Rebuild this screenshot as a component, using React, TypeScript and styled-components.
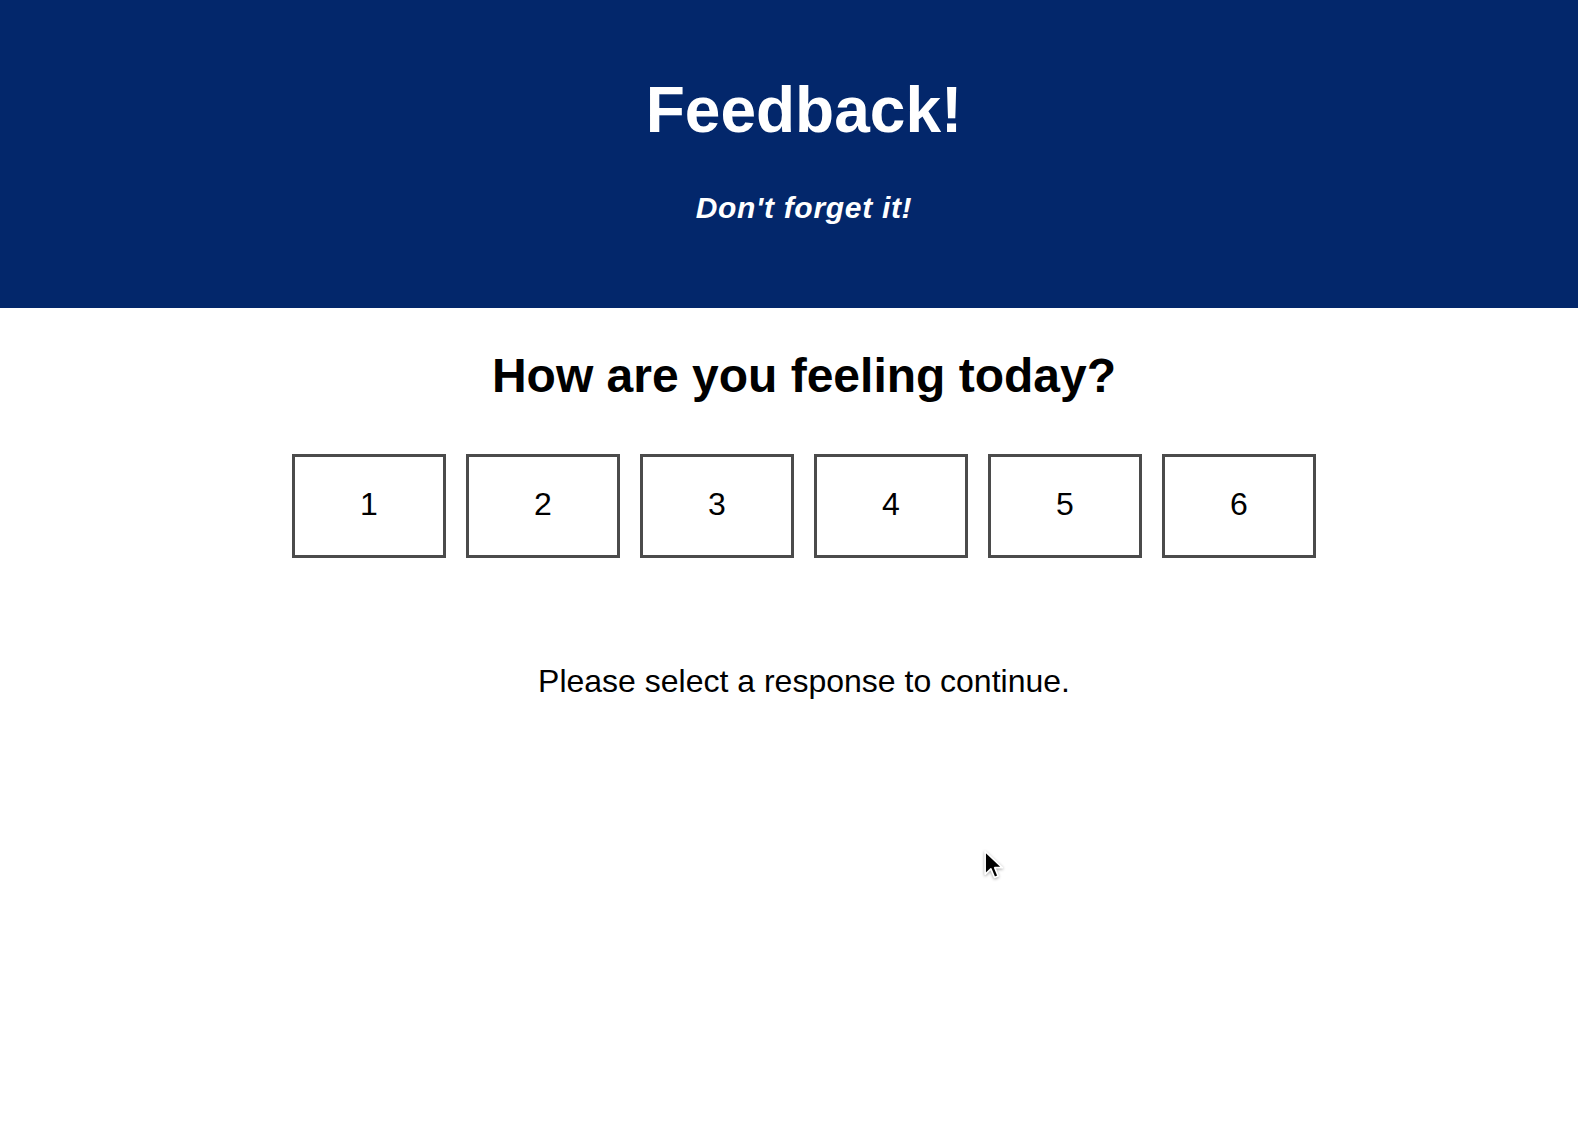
import React from "react";
import styled, { createGlobalStyle } from "styled-components";

const GlobalStyle = createGlobalStyle`
  html, body {
    margin: 0;
    padding: 0;
    background: #ffffff;
  }
  body {
    font-family: "Liberation Sans", Arial, Helvetica, sans-serif;
    color: #000000;
  }
`;

const Page = styled.div`
  position: relative;
  min-height: 100vh;
  display: flex;
  flex-direction: column;
`;

const Header = styled.header`
  background: #03276b;
  height: 308px;
  box-sizing: border-box;
  padding: 78px 0 0 30px;
  display: flex;
  flex-direction: column;
  align-items: center;
  color: #ffffff;
`;

const Title = styled.h1`
  margin: 0;
  font-size: 64px;
  line-height: 64px;
  font-weight: 700;
  letter-spacing: 0;
`;

const Subtitle = styled.p`
  margin: 51px 0 0;
  font-size: 30px;
  line-height: 30px;
  font-weight: 700;
  font-style: italic;
  letter-spacing: 0.7px;
`;

const Main = styled.main`
  display: flex;
  flex-direction: column;
  align-items: center;
  padding: 44px 0 0 30px;
`;

const Question = styled.h2`
  margin: 0;
  font-size: 48px;
  line-height: 48px;
  font-weight: 700;
`;

const Options = styled.div`
  margin-top: 54px;
  display: flex;
  gap: 20px;
`;

const Option = styled.button`
  width: 154px;
  height: 104px;
  box-sizing: border-box;
  border: 3px solid #4b4b4b;
  background: #ffffff;
  display: flex;
  align-items: center;
  justify-content: center;
  font-family: "Liberation Sans", Arial, Helvetica, sans-serif;
  font-size: 32px;
  color: #000000;
  padding: 0 0 3px;
  cursor: pointer;
`;

const Prompt = styled.p`
  margin: 107px 0 0;
  font-size: 32px;
  line-height: 32px;
`;

const Pointer = styled.svg`
  position: absolute;
  left: 982px;
  top: 849px;
  width: 25px;
  height: 34px;
  pointer-events: none;
  filter: drop-shadow(0 1px 1.5px rgba(0, 0, 0, 0.35));
`;

export default function App() {
  const values = [1, 2, 3, 4, 5, 6];
  return (
    <>
      <GlobalStyle />
      <Page>
        <Header>
          <Title>Feedback!</Title>
          <Subtitle>Don't forget it!</Subtitle>
        </Header>
        <Main>
          <Question>How are you feeling today?</Question>
          <Options>
            {values.map((v) => (
              <Option key={v}>{v}</Option>
            ))}
          </Options>
          <Prompt>Please select a response to continue.</Prompt>
        </Main>
        <Pointer viewBox="0 0 24 32">
          <path
            d="M3 2 L3 24 L8.5 18.8 L12 27 L15.5 25.5 L12.2 17.6 L19.5 17.6 Z"
            fill="#000000"
            stroke="#ffffff"
            strokeWidth="1.6"
            strokeLinejoin="round"
          />
        </Pointer>
      </Page>
    </>
  );
}
